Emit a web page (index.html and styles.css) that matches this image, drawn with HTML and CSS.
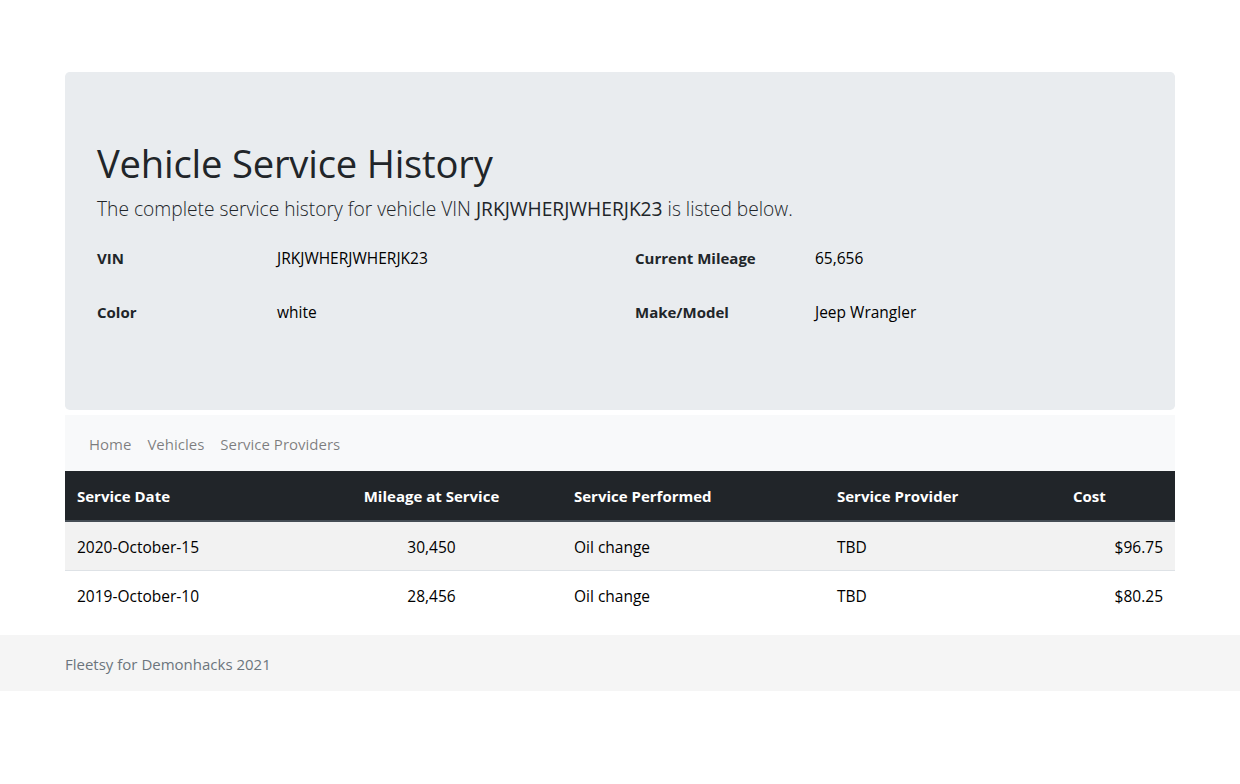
FILE: index.html
```html
<!DOCTYPE html>
<html lang="en">
<head>
<meta charset="utf-8">
<title>Vehicle Service History</title>
<link rel="stylesheet" href="styles.css">
</head>
<body>
<main class="container page">
  <section class="jumbotron">
    <h1 class="title">Vehicle Service History</h1>
    <p class="lead">The complete service history for vehicle VIN <strong>JRKJWHERJWHERJK23</strong> is listed below.</p>
    <div class="details">
      <div class="detail"><span class="label">VIN</span><span class="value">JRKJWHERJWHERJK23</span></div>
      <div class="detail"><span class="label">Current Mileage</span><span class="value">65,656</span></div>
      <div class="detail"><span class="label">Color</span><span class="value">white</span></div>
      <div class="detail"><span class="label">Make/Model</span><span class="value">Jeep Wrangler</span></div>
    </div>
  </section>
  <nav class="navbar">
    <a class="nav-link" href="#">Home</a>
    <a class="nav-link" href="#">Vehicles</a>
    <a class="nav-link" href="#">Service Providers</a>
  </nav>
  <table class="table">
    <colgroup>
      <col class="c1"><col class="c2"><col class="c3"><col class="c4"><col class="c5">
    </colgroup>
    <thead>
      <tr>
        <th>Service Date</th>
        <th class="center">Mileage at Service</th>
        <th>Service Performed</th>
        <th>Service Provider</th>
        <th>Cost</th>
      </tr>
    </thead>
    <tbody>
      <tr class="odd">
        <td>2020-October-15</td>
        <td class="center">30,450</td>
        <td>Oil change</td>
        <td>TBD</td>
        <td class="right">$96.75</td>
      </tr>
      <tr>
        <td>2019-October-10</td>
        <td class="center">28,456</td>
        <td>Oil change</td>
        <td>TBD</td>
        <td class="right">$80.25</td>
      </tr>
    </tbody>
  </table>
</main>
<footer class="footer">
  <div class="container">
    <span class="footer-text">Fleetsy for Demonhacks 2021</span>
  </div>
</footer>
</body>
</html>
```

FILE: styles.css
```css
* { box-sizing: border-box; }

body {
  margin: 0;
  font-family: "Open Sans", "Noto Sans", sans-serif;
  font-size: 16px;
  line-height: 1.5;
  color: #212529;
  background: #fff;
}

.container {
  width: 1110px;
  margin: 0 auto;
}

.page {
  padding-top: 72px;
}

.jumbotron {
  background: #e9ecef;
  border-radius: 4.8px;
  padding: 67px 32px 78px 32px;
  margin-bottom: 5px;
}

.title {
  margin: 0 0 7px 0;
  font-size: 38.2px;
  font-weight: 400;
  line-height: 48px;
  letter-spacing: -0.2px;
}

.lead {
  margin: 0 0 14px 0;
  font-size: 19.2px;
  font-weight: 300;
  line-height: 30px;
}

.lead strong {
  font-weight: 400;
}

.details {
  display: grid;
  grid-template-columns: 538px 508px;
  row-gap: 14px;
}

.detail {
  display: grid;
  grid-template-columns: 180px 1fr;
  padding: 8px 0;
  font-size: 15px;
  line-height: 24px;
  color: #000;
}

.value {
  font-size: 15.5px;
}

.label {
  font-weight: 700;
  color: #212529;
}

.navbar {
  background: #f8f9fa;
  display: flex;
  padding: 9px 16px 7px 16px;
  height: 56px;
  align-items: center;
}

.nav-link {
  color: rgba(0, 0, 0, 0.5);
  text-decoration: none;
  padding: 8px;
  font-size: 15px;
  line-height: 24px;
}

.table {
  width: 100%;
  border-collapse: collapse;
  table-layout: fixed;
  margin-bottom: 16px;
  font-size: 15px;
}

.c1 { width: 236px; }
.c2 { width: 261px; }
.c3 { width: 263px; }
.c4 { width: 236px; }
.c5 { width: 114px; }

.table th,
.table td {
  padding: 13px 12px 11px 12px;
  line-height: 24px;
  text-align: left;
  vertical-align: top;
}

.table thead th {
  background: #212529;
  color: #fff;
  font-weight: 700;
  border-bottom: 2px solid #454d55;
  height: 50px;
}

.table tbody td {
  color: #000;
  height: 48px;
  font-size: 15.5px;
}

.table tbody tr.odd td {
  background: #f2f2f2;
  border-bottom: 1px solid #dee2e6;
}

.table .center { text-align: center; }
.table .right { text-align: right; }

.footer {
  background: #f5f5f5;
  height: 56px;
  display: flex;
  align-items: center;
  padding-top: 2px;
}

.footer-text {
  color: #6c757d;
  font-size: 15px;
  line-height: 24px;
}
```
